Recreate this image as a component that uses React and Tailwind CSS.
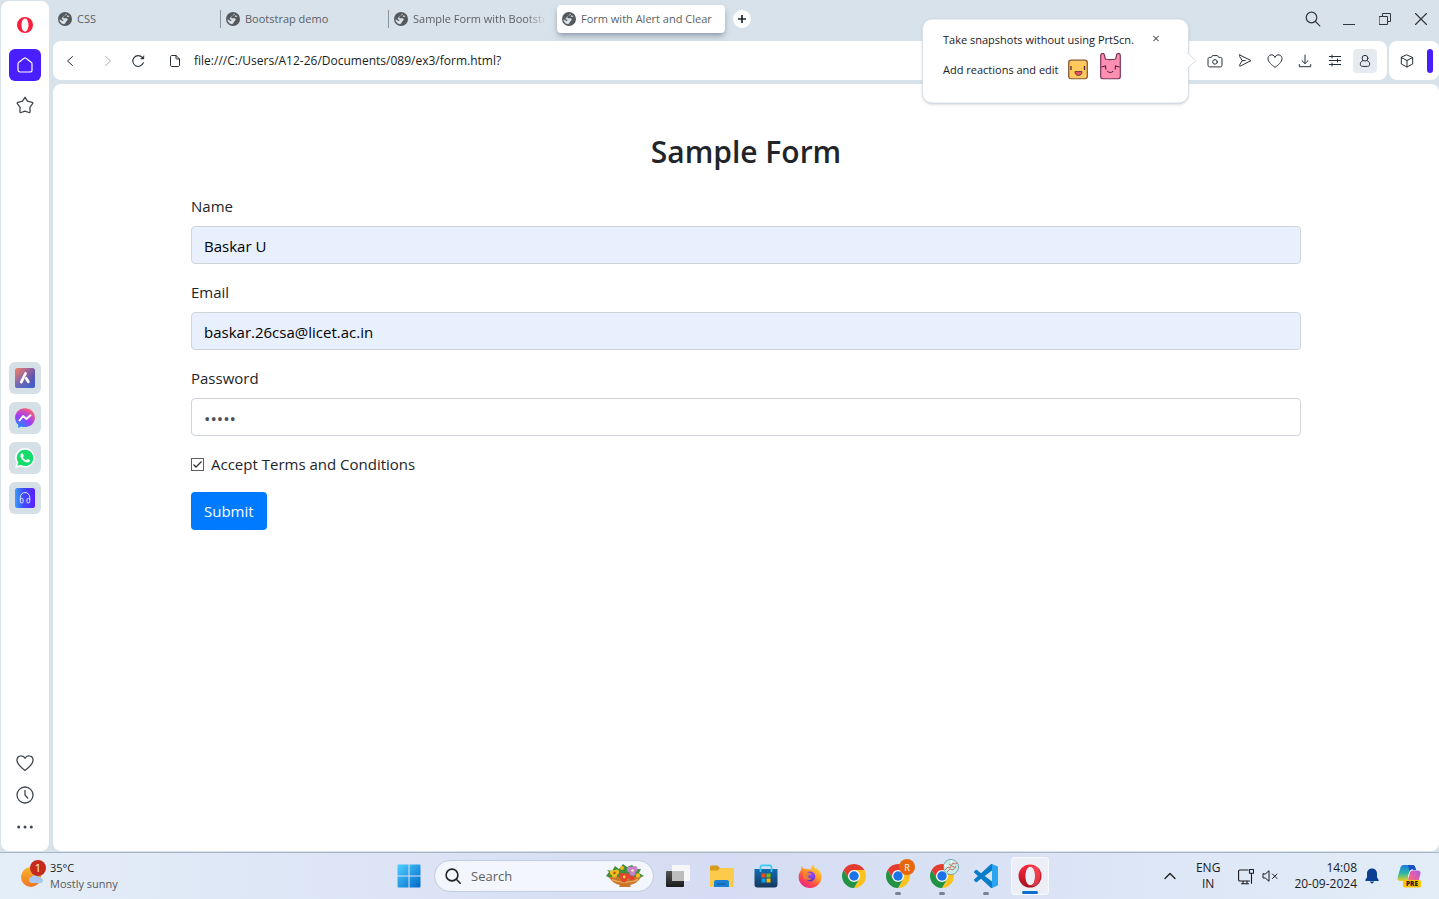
const stroke = { fill: "none", stroke: "currentColor", strokeLinecap: "round", strokeLinejoin: "round" };

function Globe() {
  return (
    <svg viewBox="0 0 14 14" className="size-3.5 shrink-0">
      <circle cx="7" cy="7" r="7" fill="#55595c" />
      <path d="M8.600 1.500C9.200 2.600 8 3.300 6.900 3.600c-1 .3-.6 1.200-1.400 1.600-.7.300-.3 1.100.5 1.100h2.400c1.200 0 1.500.9 1.200 1.700-.4 1-1.400 1-1.700 2-.2.900-.9 1.700-1.700 2.200C3.500 12 1.500 9.600 1.500 7.200c1 .5 1.900 1 2.600 1.600.6.500 1.300.2 1.200-.4C5.200 7.500 4 7.300 3.400 6.500" fill="#d8e2ea" />
      <path d="M9.300 3.200c.9.100 1.700.6 2.300 1.300-.9.500-2 .4-2.900.200Z" fill="#d8e2ea" />
    </svg>
  );
}

function OperaRing({ className }) {
  return (
    <svg viewBox="0 0 16 16" className={className} fill="#fa1e3c" fillRule="evenodd">
      <path d="M8 0a8 8 0 1 0 0 16A8 8 0 0 0 8 0Zm0 1.400c2.100 0 3.500 2.900 3.500 6.600s-1.400 6.600-3.500 6.600S4.500 11.700 4.500 8 5.900 1.400 8 1.400Z" />
    </svg>
  );
}

function Heart({ className }) {
  return (
    <svg viewBox="0 0 18 18" className={className} {...stroke} strokeWidth="1.300">
      <path d="M9 4.200C7.800 2 5.800 1.600 4.400 1.900 2 2.300.9 4.300 1 6.600c.1 3.600 4.300 7 8 9.800 3.700-2.800 7.900-6.200 8-9.800.1-2.300-1-4.300-3.400-4.700-1.400-.3-3.400.1-4.600 2.300Z" />
    </svg>
  );
}

function AriaIcon() {
  return (
    <svg viewBox="0 0 20 20" className="size-5">
      <defs>
        <linearGradient id="aria" x1="0" y1="0" x2="1" y2="0.7">
          <stop offset="0" stopColor="#f08060" />
          <stop offset="0.4" stopColor="#b06a90" />
          <stop offset="1" stopColor="#3b48b8" />
        </linearGradient>
        <linearGradient id="ariaLow" x1="0" y1="0" x2="0" y2="1">
          <stop offset="0.3" stopColor="#4a70d0" stopOpacity="0" />
          <stop offset="1" stopColor="#4a70d0" />
        </linearGradient>
      </defs>
      <rect width="20" height="20" rx="2.500" fill="url(#aria)" />
      <rect width="20" height="20" rx="2.500" fill="url(#ariaLow)" opacity=".7" />
      <path d="M10.500 5.500 6.300 14" stroke="#fff" strokeWidth="2.800" strokeLinecap="round" />
      <path d="m11.300 10.500 2 3.300" stroke="#fff" strokeWidth="2.800" strokeLinecap="round" />
    </svg>
  );
}

function MessengerIcon() {
  return (
    <svg viewBox="0 0 20 20" className="size-5">
      <defs>
        <radialGradient id="msgr" cx=".2" cy="1" r="1.100">
          <stop offset="0" stopColor="#0a95ff" />
          <stop offset=".55" stopColor="#9a3cff" />
          <stop offset="1" stopColor="#ff5f72" />
        </radialGradient>
      </defs>
      <path d="M10 .2C4.400.2.100 4.200.100 9.700c0 2.900 1.200 5.400 3.100 7.100V20l3-1.600c1.200.4 2.500.6 3.800.6 5.600 0 9.900-4 9.900-9.300C19.900 4.200 15.600.2 10 .2Z" fill="url(#msgr)" />
      <path d="m4.500 12.500 3.600-4.500 3.300 2.900 4.100-3.600" fill="none" stroke="#fff" strokeWidth="2" strokeLinejoin="round" strokeLinecap="round" />
    </svg>
  );
}

function WhatsAppIcon() {
  return (
    <svg viewBox="0 0 20 20" className="size-5">
      <path d="M10 0a9.800 9.800 0 0 0-8.300 15L.2 20l5.200-1.500A9.800 9.800 0 1 0 10 0Z" fill="#fff" />
      <path d="M10 1.700a8.200 8.200 0 0 0-6.700 12.900l-.9 3.100 3.300-.9A8.200 8.200 0 1 0 10 1.700Z" fill="#16dc6c" />
      <path d="M6.800 5.200c-.4 0-1.600.9-1.400 2.600.4 3.400 4 6.600 7.100 6.700 1.600 0 2.700-1.200 2.500-2 0-.3-2.200-1.400-2.500-1.400-.4 0-.9 1.200-1.300 1.200-.6 0-3.100-2-3.300-3 0-.4 1-.9.900-1.400-.1-.4-.9-2.700-1.300-2.700Z" fill="#fff" />
    </svg>
  );
}

function PlayerIcon() {
  return (
    <svg viewBox="0 0 20 20" className="size-5">
      <defs>
        <linearGradient id="player" x1="0" y1="0" x2="1" y2="0">
          <stop offset="0" stopColor="#3aa0ff" />
          <stop offset=".4" stopColor="#3f4dff" />
          <stop offset="1" stopColor="#5a1fff" />
        </linearGradient>
      </defs>
      <rect width="20" height="20" rx="2.500" fill="url(#player)" />
      <path d="M5.300 12V9.200a4.700 4.700 0 0 1 9.400 0V12" fill="none" stroke="#dfe6ff" strokeWidth="1" />
      <rect x="5.300" y="10.500" width="2.800" height="4.500" rx="1.200" fill="none" stroke="#dfe6ff" />
      <rect x="11.900" y="10.500" width="2.800" height="4.500" rx="1.200" fill="none" stroke="#dfe6ff" />
    </svg>
  );
}

const sideApps = [
  { name: "Aria", icon: AriaIcon },
  { name: "Messenger", icon: MessengerIcon },
  { name: "WhatsApp", icon: WhatsAppIcon },
  { name: "Player", icon: PlayerIcon },
];

function Sidebar() {
  return (
    <nav className="ml-px mt-px flex w-12 shrink-0 flex-col items-center justify-between rounded-lg bg-white pt-2 text-[#3f4750]">
      <div className="flex flex-col items-center gap-2 pb-2">
        <button aria-label="Opera menu" className="grid size-8 place-items-center">
          <OperaRing className="size-4" />
        </button>
        <button aria-label="Home" className="grid size-8 place-items-center rounded-md bg-[#4a1fff] text-white">
          <svg viewBox="0 0 16 16" className="size-4" {...stroke} strokeWidth="1.200">
            <path d="M1 6.800c0-.6.2-1 .6-1.300L7 1.200c.6-.5 1.400-.5 2 0l5.400 4.300c.4.300.6.700.6 1.300V13c0 1.200-.8 2-2 2H3c-1.200 0-2-.8-2-2Z" />
          </svg>
        </button>
        <button aria-label="Bookmarks" className="grid size-8 place-items-center">
          <svg viewBox="0 0 18 18" className="size-[18px]" {...stroke} strokeWidth="1.300">
            <path d="m9 1.300 2.500 3.800 4.700 1.300c.6.200.8.800.4 1.300l-2.700 3.600.2 4.400c0 .7-.6 1-1.200.8L9 15.200l-3.900 1.300c-.6.200-1.200-.1-1.200-.8l.2-4.400L1.400 7.700c-.4-.5-.2-1.100.4-1.300l4.700-1.300Z" />
          </svg>
        </button>
      </div>
      <div className="flex flex-col gap-2">
        {sideApps.map(({ name, icon: Icon }) => (
          <button key={name} aria-label={name} className="grid size-8 place-items-center rounded-md bg-[#d5e0e6]">
            <Icon />
          </button>
        ))}
      </div>
      <div className="flex flex-col pb-2">
        <button aria-label="Pinboards" className="grid size-8 place-items-center">
          <Heart className="size-[18px]" />
        </button>
        <button aria-label="History" className="grid size-8 place-items-center">
          <svg viewBox="0 0 18 18" className="size-[18px]" {...stroke} strokeWidth="1.300">
            <circle cx="9" cy="9" r="8" />
            <path d="M9 4.500V9l2.700 3" />
          </svg>
        </button>
        <button aria-label="More" className="grid size-8 place-items-center">
          <svg viewBox="0 0 16 4" className="h-1 w-4" fill="#3f4750">
            <circle cx="1.700" cy="2" r="1.500" />
            <circle cx="8" cy="2" r="1.500" />
            <circle cx="14.300" cy="2" r="1.500" />
          </svg>
        </button>
      </div>
    </nav>
  );
}

const tabs = [
  { title: "CSS" },
  { title: "Bootstrap demo", divider: true },
  { title: "Sample Form with Bootstr", divider: true, fade: true },
  { title: "Form with Alert and Clear", active: true },
];

function TabStrip() {
  return (
    <header className="flex h-10 shrink-0 items-center justify-between pb-0.5">
      <div className="flex items-center" role="tablist">
        {tabs.map((tab) => (
          <button
            key={tab.title}
            role="tab"
            aria-selected={!!tab.active}
            className={
              tab.active
                ? "flex h-7 w-[168px] items-center gap-[5px] rounded bg-white px-[5px] text-[#5a5f63] shadow-md shadow-slate-500/50"
                : "flex h-7 w-[168px] items-center gap-[5px] px-[5px] text-[#5a5f63]"
            }
          >
            {tab.divider && <span className="-ml-1.5 h-[18px] w-px shrink-0 bg-[#8d9499]" />}
            <Globe />
            <span
              className={
                tab.fade
                  ? "whitespace-nowrap [mask-image:linear-gradient(to_right,black_85%,transparent)]"
                  : "whitespace-nowrap"
              }
            >
              {tab.title}
            </span>
          </button>
        ))}
        <button aria-label="New tab" className="ml-2 grid size-[18px] place-items-center rounded-full bg-white">
          <svg viewBox="0 0 8 8" className="size-2" stroke="#1d2733" strokeWidth="1.700">
            <path d="M4 0v8M0 4h8" />
          </svg>
        </button>
      </div>
      <div className="flex text-[#30373d]">
        <button aria-label="Search tabs" className="grid h-8 w-9 place-items-center">
          <svg viewBox="0 0 16 16" className="size-4" {...stroke} strokeWidth="1.200">
            <circle cx="6.500" cy="6.500" r="5.300" />
            <path d="m10.500 10.500 4.300 4.300" />
          </svg>
        </button>
        <button aria-label="Minimise" className="grid h-8 w-9 place-items-center">
          <svg viewBox="0 0 12 12" className="size-3" {...stroke}>
            <path d="M0 11.500h12" />
          </svg>
        </button>
        <button aria-label="Restore" className="grid h-8 w-9 place-items-center">
          <svg viewBox="0 0 12 12" className="size-3" {...stroke}>
            <path d="M.5 3.500h8v8h-8zM3.500 3.500v-3h8v8h-3" />
          </svg>
        </button>
        <button aria-label="Close window" className="grid h-8 w-9 place-items-center">
          <svg viewBox="0 0 12 12" className="size-3" {...stroke} strokeWidth="1.200">
            <path d="m.5.5 11 11M11.500.5l-11 11" />
          </svg>
        </button>
      </div>
    </header>
  );
}

function SnapshotHint() {
  return (
    <aside className="absolute right-full top-1/2 z-10 mr-[11px] flex h-[85px] w-[267px] -translate-y-1/2 flex-col gap-0.5 rounded-[10px] border border-[#d5e0ea] bg-white pl-5 pt-[11px] text-[#1a2028] shadow-sm">
      <div className="flex h-5 items-center justify-between pr-[26px]">
        <p className="whitespace-nowrap">Take snapshots without using PrtScn.</p>
        <button aria-label="Dismiss" className="mb-1 grid size-3 place-items-center">
          <svg viewBox="0 0 6 6" className="size-1.5" stroke="#1a2028" strokeWidth="1">
            <path d="m0 0 6 6M6 0 0 6" />
          </svg>
        </button>
      </div>
      <div className="flex items-center gap-2">
        <p className="whitespace-nowrap pt-2">Add reactions and edit</p>
        <svg viewBox="0 0 54 27" className="h-[27px] w-[54px]">
          <rect x="1.700" y="7.700" width="18.600" height="18.600" rx="2.500" fill="#ffc95c" stroke="#8a5a3a" strokeWidth="1.300" />
          <path d="M4 13.500v4M17.500 13.500v4" stroke="#4a2b3c" strokeWidth="1.300" />
          <path d="M8 19h7c0 2.500-1.300 4-3.500 4S8 21.500 8 19Z" fill="#e05661" stroke="#5a2d3c" strokeWidth=".8" />
          <path d="M33.700 24V3.500c0-1.500.8-2.700 2-2.700.8 0 1.300.4 1.600 1.200l1 4.500c3 .8 7.400.8 10.400 0l1-4.500c.3-.8.800-1.200 1.600-1.200 1.200 0 2 1.200 2 2.700V24c0 1.400-1 2.300-2.300 2.300H36c-1.300 0-2.300-.9-2.300-2.300Z" fill="#ff8fb3" stroke="#7c3458" strokeWidth="1.200" />
          <path d="m34.500 14.500 4-1 .3 3.500M52.500 14.500l-4-1-.3 3.500M40.300 18.500c1.500 2 4.400 2 5.900 0" fill="none" stroke="#5c2346" strokeWidth="1.200" />
        </svg>
      </div>
      <svg viewBox="0 0 10 16" className="absolute left-full top-[33px] -ml-px h-4 w-2.5">
        <path d="M0 0l9 8-9 8" fill="#fff" stroke="#d5e0ea" />
      </svg>
    </aside>
  );
}

function ToolButton({ label, children, active }) {
  return (
    <button aria-label={label} className="grid h-8 w-[30px] place-items-center">
      <span className={active ? "grid size-6 place-items-center rounded bg-[#e6ebef]" : "grid size-6 place-items-center"}>
        <svg viewBox="0 0 16 16" className="size-4" {...stroke} strokeWidth="1">
          {children}
        </svg>
      </span>
    </button>
  );
}

function Toolbar() {
  return (
    <div className="mt-px flex h-[39px] shrink-0 gap-0.5 text-[#27303a]">
      <div className="flex min-w-0 flex-1 items-center rounded-lg bg-white pr-[7px]">
        <button aria-label="Back" className="grid h-8 w-[34px] place-items-center">
          <svg viewBox="0 0 6 10" className="h-2.5 w-1.5" {...stroke}><path d="M5.500.5.500 5l5 4.500" /></svg>
        </button>
        <button aria-label="Forward" className="ml-1 grid h-8 w-[34px] place-items-center text-[#a4abb2]" disabled>
          <svg viewBox="0 0 6 10" className="h-2.5 w-1.5" {...stroke}><path d="M.5.500 5.500 5l-5 4.500" /></svg>
        </button>
        <button aria-label="Reload" className="grid h-8 w-[26px] place-items-center">
          <svg viewBox="0 0 14 14" className="size-3.5" {...stroke} strokeWidth="1.100">
            <path d="M12.300 8.800A5.400 5.400 0 1 1 11.300 3.500L12.300 4.500" />
            <path d="M12.800 2v3H9.800Z" fill="currentColor" strokeWidth=".5" />
          </svg>
        </button>
        <svg viewBox="0 0 10 12" className="ml-[19px] h-3 w-2.5" {...stroke}>
          <path d="M6 .5H2C1 .5.500 1 .5 2v8c0 1 .5 1.500 1.500 1.500h6c1 0 1.500-.5 1.500-1.500V4L6 .5v2.700c0 .6.300.8.800.8h2.700" />
        </svg>
        <input
          aria-label="Address"
          defaultValue="file:///C:/Users/A12-26/Documents/089/ex3/form.html?"
          className="ml-3.5 h-8 min-w-0 flex-1 text-[12px] text-[#1a1d20] outline-none"
        />
        <div className="relative">
          <ToolButton label="Snapshot">
            <path d="M1 6c0-1 .6-1.600 1.600-1.600h1.700l1.200-1.800h5l1.200 1.800h1.700c1 0 1.600.6 1.600 1.600v6.300c0 1-.6 1.600-1.600 1.600H2.600c-1 0-1.600-.6-1.600-1.600Z" />
            <circle cx="8" cy="8.900" r="2.300" />
          </ToolButton>
          <SnapshotHint />
        </div>
        <ToolButton label="My Flow">
          <path d="M2.800 2 14 7.600 2.800 13.300c-.6-.4-.5-1-.1-1.600L5.300 7.600 2.700 3.600c-.4-.6-.5-1.200.1-1.600ZM5.300 7.600h3" />
        </ToolButton>
        <ToolButton label="Favourite">
          <path d="M8 4C7 2 5.200 1.700 4 1.900 2 2.200.9 3.900 1 5.900c.1 3.200 3.800 6 7 8.500 3.200-2.500 6.900-5.300 7-8.500.1-2-1-3.700-3-4C10.800 1.700 9 2 8 4Z" />
        </ToolButton>
        <ToolButton label="Downloads">
          <path d="M8 2v8.500M5 7.700l3 2.900 3-2.900M2.300 11.500v2.200h11.400v-2.200" />
        </ToolButton>
        <ToolButton label="Easy setup">
          <path d="M2.300 3.500h11.400M2.300 7.500h11.400M2.300 11.500h11.400M5 2v3M10.500 6v3M5 10v3" />
        </ToolButton>
        <ToolButton label="Profile" active>
          <circle cx="8" cy="5.200" r="2.900" />
          <path d="M5.600 7.700C4 8.500 3.300 9.800 3.300 11.200c0 1.400.9 2.200 2.200 2.200h5c1.300 0 2.200-.8 2.200-2.200 0-1.400-.7-2.700-2.300-3.500" />
        </ToolButton>
      </div>
      <div className="flex w-[50px] shrink-0 items-center justify-between rounded-lg bg-white pl-[3px] pr-1.5">
        <ToolButton label="Extensions">
          <path d="m8 2 5.700 2.500V11L8 14l-5.700-3V4.500ZM2.300 4.500 8 7.500l5.700-3M8 7.500V14" />
        </ToolButton>
        <span className="h-6 w-1.5 rounded-sm bg-[#4a1fff]" />
      </div>
    </div>
  );
}

function FormPage() {
  return (
    <main className="mt-1 min-h-0 flex-1 overflow-hidden rounded-lg bg-white text-[15px] leading-6 text-[#212529]">
      <form className="mx-auto mt-12 max-w-[1140px] px-[15px]" onSubmit={(e) => e.preventDefault()}>
        <h2 className="mb-[22px] text-center text-[30px] font-semibold leading-10">Sample Form</h2>
        <div className="mb-4 flex flex-col gap-2">
          <label htmlFor="name">Name</label>
          <input id="name" defaultValue="Baskar U" className="h-[38px] rounded-sm border border-[#ced4da] bg-[#e8f0fe] px-3 pt-0.5 text-black" />
        </div>
        <div className="mb-4 flex flex-col gap-2">
          <label htmlFor="email">Email</label>
          <input id="email" type="email" defaultValue="baskar.26csa@licet.ac.in" className="h-[38px] rounded-sm border border-[#ced4da] bg-[#e8f0fe] px-3 pt-0.5 text-black" />
        </div>
        <div className="mb-4 flex flex-col gap-2">
          <label htmlFor="password">Password</label>
          <input id="password" type="password" defaultValue="12345" className="h-[38px] rounded-sm border border-[#ced4da] bg-white px-3 pt-0.5 text-[17px] text-[#495057]" />
        </div>
        <div className="mb-4 flex items-center gap-[7px]">
          <span className="grid size-[13px] place-items-center">
            <input id="terms" type="checkbox" defaultChecked className="peer col-start-1 row-start-1 size-[13px] appearance-none border border-[#5c5c5c] bg-white" />
            <svg viewBox="0 0 13 13" className="pointer-events-none invisible col-start-1 row-start-1 size-[13px] peer-checked:visible" fill="none" stroke="#333" strokeWidth="1.300">
              <path d="m2.500 6.500 2.500 2.500 5.500-5.500" />
            </svg>
          </span>
          <label htmlFor="terms">Accept Terms and Conditions</label>
        </div>
        <button type="submit" className="h-[38px] rounded-sm bg-[#007bff] px-[13px] text-white">Submit</button>
      </form>
    </main>
  );
}

function ChromeLogo() {
  return (
    <svg viewBox="0 0 48 48" className="size-6">
      <circle cx="24" cy="24" r="12" fill="#fff" />
      <path fill="#e33b2e" d="M24 12h20.780a24 24 0 0 0-41.560 0L13.610 30A12 12 0 0 1 24 12Z" />
      <path fill="#fcc31e" d="M34.390 30 24 48a24 24 0 0 0 20.780-36H24a12 12 0 0 1 10.390 18Z" />
      <path fill="#229342" d="M13.610 30 3.220 12A24 24 0 0 0 24 48l10.390-18a12 12 0 0 1-20.780 0Z" />
      <circle cx="24" cy="24" r="9.500" fill="#1a73e8" />
    </svg>
  );
}

function StartLogo() {
  return (
    <svg viewBox="0 0 24 24" className="size-6">
      <defs>
        <linearGradient id="start" x1="0" y1="0" x2="1" y2="1">
          <stop offset="0" stopColor="#4fd0ff" />
          <stop offset="1" stopColor="#0067c9" />
        </linearGradient>
      </defs>
      <path fill="url(#start)" d="M.5 1.500a1 1 0 0 1 1-1h10v11H.5ZM12.500.5h10a1 1 0 0 1 1 1v10h-11ZM.5 12.500h11v11h-10a1 1 0 0 1-1-1ZM12.500 12.500h11v10a1 1 0 0 1-1 1h-10Z" />
    </svg>
  );
}

function TaskViewLogo() {
  return (
    <svg viewBox="0 0 24 24" className="size-6">
      <defs>
        <linearGradient id="tv" x1="0" y1="0" x2="0" y2="1">
          <stop offset="0" stopColor="#555" />
          <stop offset="1" stopColor="#1b1b1b" />
        </linearGradient>
      </defs>
      <rect x="0" y="7" width="18" height="16" rx="1" fill="url(#tv)" />
      <rect x="6" y="1" width="18" height="16" rx="1" fill="#f7f7f7" />
      <path d="M6 7h12v10H7a1 1 0 0 1-1-1Z" fill="#bdbdbd" />
    </svg>
  );
}

function FolderLogo() {
  return (
    <svg viewBox="0 0 24 24" className="size-6">
      <path d="M0 3c0-.8.600-1.500 1.500-1.500h6L10 4v5H0Z" fill="#d89a1c" />
      <path d="M0 6.500h7.500L10 4h12.500c.9 0 1.500.7 1.500 1.500v16c0 1-.6 1.500-1.500 1.500h-21C.6 23 0 22.500 0 21.500Z" fill="#fdcb4c" />
      <path d="M4 23v-5c0-1.200.8-2 2-2h11c1.200 0 2 .8 2 2v5Z" fill="#1a80d0" />
      <path d="M7.500 20h8" stroke="#0d5da8" strokeWidth="1.300" />
    </svg>
  );
}

function StoreLogo() {
  return (
    <svg viewBox="0 0 24 24" className="size-6">
      <defs>
        <linearGradient id="store" x1="0" y1="0" x2="0" y2="1">
          <stop offset="0" stopColor="#0f6fb4" />
          <stop offset="1" stopColor="#17365c" />
        </linearGradient>
      </defs>
      <path d="M6.500 7V3c0-1 .6-1.700 1.700-1.700h7.600c1.100 0 1.700.7 1.700 1.700v4" fill="none" stroke="#3ccbf4" strokeWidth="1.700" />
      <path d="M.5 5h23v15.500a3 3 0 0 1-3 3h-17a3 3 0 0 1-3-3Z" fill="url(#store)" />
      <path d="M7.500 9.500h4v4h-4Z" fill="#f25022" />
      <path d="M12.500 9.500h4v4h-4Z" fill="#7fba00" />
      <path d="M7.500 14.500h4v4h-4Z" fill="#00a4ef" />
      <path d="M12.500 14.500h4v4h-4Z" fill="#ffb900" />
      <path d="M6.500 5v3M17.500 5v3" stroke="#3ccbf4" strokeWidth="1.700" />
    </svg>
  );
}

function FirefoxLogo() {
  return (
    <svg viewBox="0 0 24 24" className="size-6">
      <defs>
        <linearGradient id="fox" x1=".85" y1="0" x2=".2" y2="1">
          <stop offset="0" stopColor="#ffe63c" />
          <stop offset=".4" stopColor="#ff9a2a" />
          <stop offset=".7" stopColor="#ff4a4a" />
          <stop offset="1" stopColor="#e2208f" />
        </linearGradient>
        <radialGradient id="foxCore" cx=".6" cy=".3" r=".7">
          <stop offset="0" stopColor="#a050ff" />
          <stop offset="1" stopColor="#5a30c0" />
        </radialGradient>
      </defs>
      <path d="M15.800.500c0 2 .6 3 1.700 4.300.6-.3 1-.4 1.400-.2 3 2.200 4.600 5.200 4.600 8.700C23.300 19.500 18.300 24 12.200 24 5.500 24 .7 19 .7 13.200c0-3.300.8-5.200 2.500-7.300L3.400 2l2.700 3c1-.3 2-.3 3 0C10.700 4.900 12 5 13 5.800c.1-2.200 1-4.200 2.800-5.300Z" fill="url(#fox)" />
      <circle cx="12.300" cy="12.500" r="5" fill="url(#foxCore)" />
      <path d="M5 8.500c2.500-1 4.500.2 6.300.4 1.200.1 1.700.3 1.600 1-.3 1-2.400 1.300-2.800 2.200-.5 1.300 1.400 2.800 3.600 2.300-1.700 2.700-7.200 2.100-8.500-1.600C4.600 11.500 4.700 10 5 8.500Z" fill="#ff8b24" opacity=".8" />
    </svg>
  );
}

function VsCodeLogo() {
  return (
    <svg viewBox="0 0 100 100" className="size-6">
      <path fill="#0a7cc8" d="M96.500 10.800 75.900.9a6.200 6.200 0 0 0-7.100 1.200L29.300 38.100 12.200 25.100a4.200 4.200 0 0 0-5.300.2L1.400 30.300a4.200 4.200 0 0 0 0 6.200L16.200 50 1.400 63.500a4.200 4.200 0 0 0 0 6.200l5.500 5a4.200 4.200 0 0 0 5.300.2l17.100-13 39.500 36a6.200 6.200 0 0 0 7.100 1.200l20.600-9.900a6.200 6.200 0 0 0 3.500-5.600V16.400a6.200 6.200 0 0 0-3.500-5.600ZM75 72.700 45 50l30-22.800Z" />
      <path fill="#2aa5f2" d="M75 99.300V.6l21.500 10.200a6.200 6.200 0 0 1 3.500 5.600v67.200a6.200 6.200 0 0 1-3.500 5.600Z" />
    </svg>
  );
}

function OperaLogo() {
  return (
    <svg viewBox="0 0 24 24" className="size-6">
      <defs>
        <linearGradient id="op" x1="0" y1="0" x2="0" y2="1">
          <stop offset="0" stopColor="#ff2a3c" />
          <stop offset="1" stopColor="#a5101f" />
        </linearGradient>
      </defs>
      <path fill="url(#op)" fillRule="evenodd" d="M12 .5a11.500 11.500 0 1 0 0 23 11.500 11.500 0 0 0 0-23Zm.3 2.200c2.900 0 4.700 4 4.700 9.300s-1.800 9.300-4.700 9.300S7.500 17.300 7.500 12s1.900-9.300 4.800-9.300Z" />
      <path fill="#ff5a66" opacity=".55" d="M12.300 2.700c2-1 4-.9 5.700 0 5.500 4.200 5.500 14.400 0 18.600-1.700.9-3.700 1-5.700 0 2.900 0 4.700-4 4.700-9.300s-1.800-9.300-4.700-9.300Z" />
    </svg>
  );
}

function FlowerBowl() {
  return (
    <svg viewBox="0 0 40 24" className="h-6 w-10">
      <path d="m1 12 3-4-2-2 5 1 3-5 4 3 4-5 4 3 5-2 4 4 5 0-2 4 5 3-5 2H5Z" fill="#3f8f3c" />
      <path d="M4 13h32c-2 4-6 7-11 8l1 2H14l1-2C10 20 6 17 4 13Z" fill="#c9772c" />
      <path d="M7 15.500c7 3.500 19 3.500 26 0" stroke="#f0ae5c" fill="none" strokeWidth="1.300" />
      <g fill="#f5b921">
        <circle cx="7.500" cy="8.500" r="2.600" /><circle cx="11.500" cy="8" r="2.600" /><circle cx="9.500" cy="11" r="2.600" />
        <circle cx="33" cy="11.500" r="2.200" /><circle cx="17" cy="4" r="2" />
      </g>
      <g fill="#c583cc">
        <circle cx="25" cy="5.500" r="3" /><circle cx="29.500" cy="5" r="3" /><circle cx="27.500" cy="9" r="3" />
      </g>
      <g fill="#e5432f">
        <circle cx="17" cy="12" r="3" /><circle cx="21.500" cy="12" r="3" /><circle cx="19" cy="15.500" r="2.800" />
        <circle cx="27" cy="14" r="2.400" />
      </g>
      <circle cx="19.200" cy="13" r="1.400" fill="#ffd34d" />
      <circle cx="27.500" cy="6.500" r="1.200" fill="#fff0b0" />
      <circle cx="9.500" cy="9" r="1.200" fill="#9c5a10" />
    </svg>
  );
}

const taskApps = [
  { name: "Task view", logo: TaskViewLogo },
  { name: "File Explorer", logo: FolderLogo },
  { name: "Microsoft Store", logo: StoreLogo },
  { name: "Firefox", logo: FirefoxLogo },
  { name: "Chrome", logo: ChromeLogo },
  { name: "Chrome profile R", logo: ChromeLogo, running: true, badge: "letter" },
  { name: "Chrome second profile", logo: ChromeLogo, running: true, badge: "globe" },
  { name: "Visual Studio Code", logo: VsCodeLogo, running: true },
  { name: "Opera", logo: OperaLogo, active: true },
];

function TaskApp({ name, logo: Logo, running, badge, active }) {
  return (
    <button aria-label={name} className="grid h-[46px] w-11 place-items-center">
      <span
        className={
          active
            ? "relative grid h-[38px] w-[38px] place-items-center rounded border border-white/60 bg-[#eceff8]"
            : "relative grid h-[38px] w-[38px] place-items-center"
        }
      >
        <Logo />
        {badge === "letter" && (
          <span className="absolute right-0.5 top-0.5 grid size-4 place-items-center rounded-full bg-[#e8660c] text-[9px] leading-none text-white">R</span>
        )}
        {badge === "globe" && (
          <svg viewBox="0 0 16 16" className="absolute right-0.5 top-0.5 size-4">
            <circle cx="8" cy="8" r="7.600" fill="#c4ece9" stroke="#5b8a8c" strokeWidth=".7" />
            <path d="m2 11 3-3 2 1 3-5 2 1 2-1M4 13l3-3 3 1 3-4M6 5l3 2 4 2" fill="none" stroke="#d9705e" strokeWidth="1" />
            <path d="m1.500 6 3 1M9 1.500 8 4" stroke="#fff" strokeWidth="1.500" />
          </svg>
        )}
        {running && <span className="absolute bottom-0 left-1/2 h-[3px] w-1.5 -translate-x-1/2 rounded-full bg-[#7c8190]" />}
        {active && <span className="absolute bottom-0 left-1/2 h-[3px] w-4 -translate-x-1/2 rounded-full bg-[#0a6fd0]" />}
      </span>
    </button>
  );
}

function Taskbar() {
  return (
    <footer className="grid h-[47px] shrink-0 grid-cols-[1fr_auto_1fr] items-center border-t border-[#a9b4c2] bg-linear-to-r from-[#e4eef8] via-[#d5dcf3] to-[#e2edf8] text-[11px] leading-4 text-[#1b1b1b]">
      <button className="flex items-center gap-1 pl-5 text-left">
        <svg viewBox="0 0 26 28" className="mb-1 h-7 w-[26px]">
          <defs>
            <linearGradient id="sun" x1="0" y1="0" x2="0" y2="1">
              <stop offset="0" stopColor="#f8b62d" />
              <stop offset="1" stopColor="#ef7420" />
            </linearGradient>
          </defs>
          <circle cx="11" cy="17" r="10" fill="url(#sun)" />
          <path d="M12 23a3 3 0 0 1 0-6c1-2.600 5-2.600 6 0 1.500-.8 3 0 3 1.300 2.500 0 2.500 4.700 0 4.700Z" fill="#a9c9f2" />
          <circle cx="18" cy="8" r="8" fill="#c42b1c" />
          <text x="18" y="12" textAnchor="middle" fontSize="11" fill="#fff">1</text>
        </svg>
        <span className="flex flex-col">
          <span>35°C</span>
          <span className="text-[#55595e]">Mostly sunny</span>
        </span>
      </button>

      <div className="flex items-center">
        <button aria-label="Start" className="grid h-[46px] w-11 place-items-center"><StartLogo /></button>
        <label className="ml-[3px] mr-0.5 flex h-8 w-[220px] items-center gap-2.5 rounded-full border border-[#c3cbe0] bg-[#f3f6fc] pl-2.5 pr-2">
          <svg viewBox="0 0 16 16" className="size-4 shrink-0" fill="none" stroke="#222" strokeWidth="1.600" strokeLinecap="round">
            <circle cx="7" cy="7" r="5.900" />
            <path d="m11.300 11.300 3.900 3.900" />
          </svg>
          <input type="search" aria-label="Search" placeholder="Search" className="min-w-0 flex-1 text-[13px] outline-none placeholder:text-[#5c6066]" />
          <FlowerBowl />
        </label>
        {taskApps.map((app) => (
          <TaskApp key={app.name} {...app} />
        ))}
      </div>

      <div className="flex items-center justify-end pr-[18px]">
        <button aria-label="Hidden icons" className="mr-5">
          <svg viewBox="0 0 12 8" className="h-2 w-3" {...stroke} strokeWidth="1.300"><path d="m1 6.500 5-5 5 5" /></svg>
        </button>
        <button className="mr-[18px] flex flex-col items-center text-[12px]">
          <span>ENG</span>
          <span>IN</span>
        </button>
        <button aria-label="Network and volume" className="mr-4 flex items-center gap-2">
          <svg viewBox="0 0 16 17" className="h-[17px] w-4" {...stroke} strokeWidth="1.100">
            <path d="M10 2H2C1 2 .6 2.500.6 3.300v8.400c0 .8.500 1.300 1.400 1.300h9.500M5 13v2.500M9 13v2.500M3.500 15.700h7M11.500 1.500h4v3.700h-4ZM13.500 5.200v10" />
          </svg>
          <svg viewBox="0 0 16 12" className="h-3 w-4" {...stroke}>
            <path d="M1 4v4h2.300L7 11.300V.7L3.300 4ZM10.500 4l4.500 4.500M15 4l-4.500 4.500" />
          </svg>
        </button>
        <button className="mr-2 flex flex-col items-end text-[12px]">
          <span>14:08</span>
          <span>20-09-2024</span>
        </button>
        <button aria-label="Notifications" className="mr-[18px]">
          <svg viewBox="0 0 14 16" className="h-4 w-3.5" fill="#0a3f94">
            <path d="M7 .5c3 0 5 2.200 5 5.200v3.500L13.700 12c.2.500 0 .9-.6.9H.9c-.6 0-.8-.4-.6-.9L2 9.200V5.700C2 2.700 4 .5 7 .5ZM5 13.600h4c-.3 1.200-1 1.800-2 1.800s-1.700-.6-2-1.800Z" />
          </svg>
        </button>
        <button aria-label="Copilot preview">
          <svg viewBox="0 0 24 24" className="size-6">
            <defs>
              <linearGradient id="copA" x1="0" y1="0" x2="0" y2="1">
                <stop offset="0" stopColor="#1a7be0" />
                <stop offset=".5" stopColor="#2ab6a8" />
                <stop offset="1" stopColor="#e6d222" />
              </linearGradient>
              <linearGradient id="copB" x1="1" y1="0" x2="0" y2="1">
                <stop offset="0" stopColor="#a95cf0" />
                <stop offset=".6" stopColor="#f0608f" />
                <stop offset="1" stopColor="#ff9c4a" />
              </linearGradient>
            </defs>
            <path d="M6.500 1h9c1.500 0 2.300 1 2.800 2.500L19 6h-3c-1.600 0-2.500.8-3 2.500L11 15c-.5 1.500-1.400 2-2.800 2H3.500C1 17 0 15.500.7 13L3.500 3.500C4 2 5 1 6.500 1Z" fill="url(#copA)" />
            <path d="M11 1h4.500c1.500 0 2.300 1 2.800 2.500L19 6h-3c-1.600 0-2.500.8-3 2.500Z" fill="#1b4fc4" />
            <path d="M11.500 13 13 8.500c.5-1.700 1.400-2.500 3-2.500" stroke="#fff" strokeWidth="1.500" fill="none" />
            <path d="M16 6.500h4.500c2.500 0 3.500 1.500 2.800 4L21.500 17c-.5 1.500-1.500 2.500-3 2.500H10l3-11c.5-1.400 1.400-2 3-2Z" fill="url(#copB)" />
            <rect x="6" y="16" width="18" height="7.500" rx="1.500" fill="#ffc400" />
            <text x="15" y="22.300" textAnchor="middle" fontSize="6.500" fontWeight="800" fill="#222">PRE</text>
          </svg>
        </button>
      </div>
    </footer>
  );
}

export default function App() {
  return (
    <div className="flex h-screen flex-col bg-[#d8e2ea] font-['Open_Sans','Noto_Sans',sans-serif] text-[11px]">
      <div className="flex min-h-0 flex-1 gap-1 pb-px">
        <Sidebar />
        <div className="flex min-w-0 flex-1 flex-col">
          <TabStrip />
          <Toolbar />
          <FormPage />
        </div>
      </div>
      <Taskbar />
    </div>
  );
}
